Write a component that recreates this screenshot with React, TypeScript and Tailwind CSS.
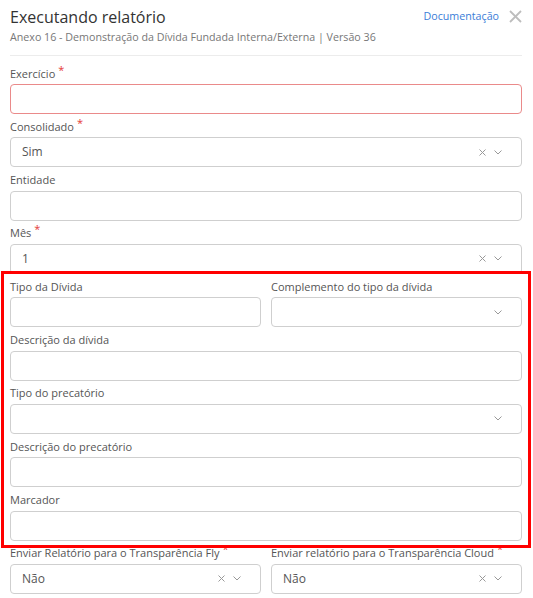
const font = { fontFamily: '"Open Sans", "Noto Sans", sans-serif' }

function Req() {
  return <span className="relative -top-[4px] ml-[3px] text-[11px] leading-none text-[#e53935]">*</span>
}

function Label({ text, required }: { text: string; required?: boolean }) {
  return (
    <div className="h-[16px] text-[11px] leading-[16px] text-[#555] whitespace-nowrap">
      {text}
      {required && <Req />}
    </div>
  )
}

function ClearIcon() {
  return (
    <svg width="7" height="7" viewBox="0 0 7 7" fill="none" stroke="#999" strokeWidth="1">
      <line x1="0.5" y1="0.5" x2="6.5" y2="6.5" />
      <line x1="6.5" y1="0.5" x2="0.5" y2="6.5" />
    </svg>
  )
}

function Chevron() {
  return (
    <svg width="8" height="5" viewBox="0 0 8 5" fill="none" stroke="#999" strokeWidth="1">
      <polyline points="0.5 0.5 4 4 7.5 0.5" />
    </svg>
  )
}

function Input({ error }: { error?: boolean }) {
  return (
    <div
      className={`mt-[2.5px] h-[30px] rounded-[4px] border bg-white ${
        error ? 'border-[#ea8a8a]' : 'border-[#cfcfcf]'
      }`}
    />
  )
}

function Select({ value, clearable = true }: { value?: string; clearable?: boolean }) {
  return (
    <div className="mt-[2.5px] h-[30px] rounded-[4px] border border-[#cfcfcf] bg-white flex items-center pl-[11px] pr-[19px]">
      <span className="flex-1 text-[12px] text-[#555]">{value}</span>
      {clearable && (
        <span className="mr-[8px] flex items-center">
          <ClearIcon />
        </span>
      )}
      <Chevron />
    </div>
  )
}

function Field({ label, required, children }: { label: string; required?: boolean; children: React.ReactNode }) {
  return (
    <div className="flex flex-col">
      <Label text={label} required={required} />
      {children}
    </div>
  )
}

export default function App() {
  return (
    <div className="relative w-[533px] h-[598px] bg-white overflow-hidden" style={font}>
      <div className="pl-[10px] pr-[11px]">
        {/* Header */}
        <div className="pt-[6px] pb-[10px] border-b border-[#ececec]">
          <div className="flex items-start justify-between">
            <h1 className="text-[16px] leading-[22px] text-[#333]">Executando relatório</h1>
            <div className="flex items-center gap-[10px] pt-[2px]">
              <span className="text-[10.7px] leading-[16px] text-[#3b7dd8]">Documentação</span>
              <svg width="13" height="13" viewBox="0 0 13 13" fill="none" stroke="#bdbdbd" strokeWidth="1.8">
                <line x1="1" y1="1" x2="12" y2="12" />
                <line x1="12" y1="1" x2="1" y2="12" />
              </svg>
            </div>
          </div>
          <div className="mt-[1px] text-[10.7px] leading-[16px] text-[#777]">
            Anexo 16 - Demonstração da Dívida Fundada Interna/Externa | Versão 36
          </div>
        </div>

        {/* Form */}
        <div className="flex flex-col gap-[4.83px] pt-[9.5px]">
          <Field label="Exercício" required>
            <Input error />
          </Field>
          <Field label="Consolidado" required>
            <Select value="Sim" />
          </Field>
          <Field label="Entidade">
            <Input />
          </Field>
          <Field label="Mês" required>
            <Select value="1" />
          </Field>
          <div className="grid grid-cols-2 gap-x-[10px]">
            <Field label="Tipo da Dívida">
              <Input />
            </Field>
            <Field label="Complemento do tipo da dívida">
              <Select clearable={false} />
            </Field>
          </div>
          <Field label="Descrição da dívida">
            <Input />
          </Field>
          <Field label="Tipo do precatório">
            <Select clearable={false} />
          </Field>
          <Field label="Descrição do precatório">
            <Input />
          </Field>
          <Field label="Marcador">
            <Input />
          </Field>
          <div className="grid grid-cols-2 gap-x-[10px]">
            <Field label="Enviar Relatório para o Transparência Fly" required>
              <Select value="Não" />
            </Field>
            <Field label="Enviar relatório para o Transparência Cloud" required>
              <Select value="Não" />
            </Field>
          </div>
        </div>
      </div>

      {/* Highlight overlay */}
      <div className="absolute left-[1px] top-[271px] w-[530px] h-[277px] border-[3px] border-[#ff0000] pointer-events-none" />
    </div>
  )
}
